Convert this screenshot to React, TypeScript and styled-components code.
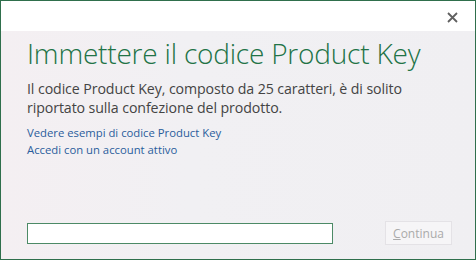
import React from 'react'
import styled, { createGlobalStyle } from 'styled-components'

const GlobalStyle = createGlobalStyle`
  html, body {
    margin: 0;
    padding: 0;
    background: #ffffff;
  }
  body {
    font-family: 'Open Sans', 'Noto Sans', 'Liberation Sans', sans-serif;
  }
`

const Frame = styled.div`
  box-sizing: border-box;
  width: 476px;
  height: 260px;
  border: 1px solid #2f6f4c;
  display: flex;
  flex-direction: column;
  background: linear-gradient(90deg, #f4eff2 0%, #f1f0f3 40%, #f0eff2 100%);
`

const TitleBar = styled.div`
  height: 30px;
  flex: none;
  background: #ffffff;
  display: flex;
  justify-content: flex-end;
  align-items: center;
  padding-right: 17px;
`

const CloseButton = styled.button`
  border: none;
  background: transparent;
  padding: 0;
  width: 12px;
  height: 12px;
  margin-top: 2px;
  display: flex;
  align-items: center;
  justify-content: center;
  cursor: pointer;
`

const Body = styled.div`
  flex: 1;
  display: flex;
  flex-direction: column;
  padding: 3px 23px 14px 26px;
`

const Title = styled.h1`
  margin: 0;
  font-weight: 350;
  font-size: 28px;
  line-height: 38px;
  color: #217346;
  letter-spacing: -0.2px;
`

const Description = styled.p`
  margin: 7px 0 0;
  font-size: 14.2px;
  line-height: 19px;
  color: #444444;
  letter-spacing: -0.1px;
`

const Links = styled.div`
  display: flex;
  flex-direction: column;
  margin-top: 7px;
`

const LinkText = styled.a`
  font-size: 11.3px;
  line-height: 17px;
  color: #2a5d9c;
  text-decoration: none;
  cursor: pointer;
`

const Footer = styled.div`
  margin-top: auto;
  display: flex;
  justify-content: space-between;
  align-items: center;
`

const KeyInput = styled.input`
  box-sizing: border-box;
  width: 306px;
  height: 21px;
  border: 1px solid #4c8a66;
  background: #ffffff;
  outline: none;
  padding: 0 4px;
  font-family: inherit;
`

const ContinueButton = styled.button`
  box-sizing: border-box;
  width: 67px;
  height: 24px;
  border: 1px solid #e4e2e6;
  background: #f6f5f7;
  color: #aaaaaa;
  font-family: inherit;
  font-size: 12px;
  padding: 0;
`

const Hotkey = styled.span`
  text-decoration: underline;
`

export default function App() {
  return (
    <>
      <GlobalStyle />
      <Frame>
        <TitleBar>
          <CloseButton aria-label='Chiudi'>
            <svg width='11' height='11' viewBox='0 0 11 11'>
              <path d='M1 1L10 10M10 1L1 10' stroke='#606060' strokeWidth='1.8' />
            </svg>
          </CloseButton>
        </TitleBar>
        <Body>
          <Title>Immettere il codice Product Key</Title>
          <Description>
            Il codice Product Key, composto da 25 caratteri, è di solito riportato sulla confezione del
            prodotto.
          </Description>
          <Links>
            <LinkText>Vedere esempi di codice Product Key</LinkText>
            <LinkText>Accedi con un account attivo</LinkText>
          </Links>
          <Footer>
            <KeyInput />
            <ContinueButton disabled>
              <Hotkey>C</Hotkey>ontinua
            </ContinueButton>
          </Footer>
        </Body>
      </Frame>
    </>
  )
}
